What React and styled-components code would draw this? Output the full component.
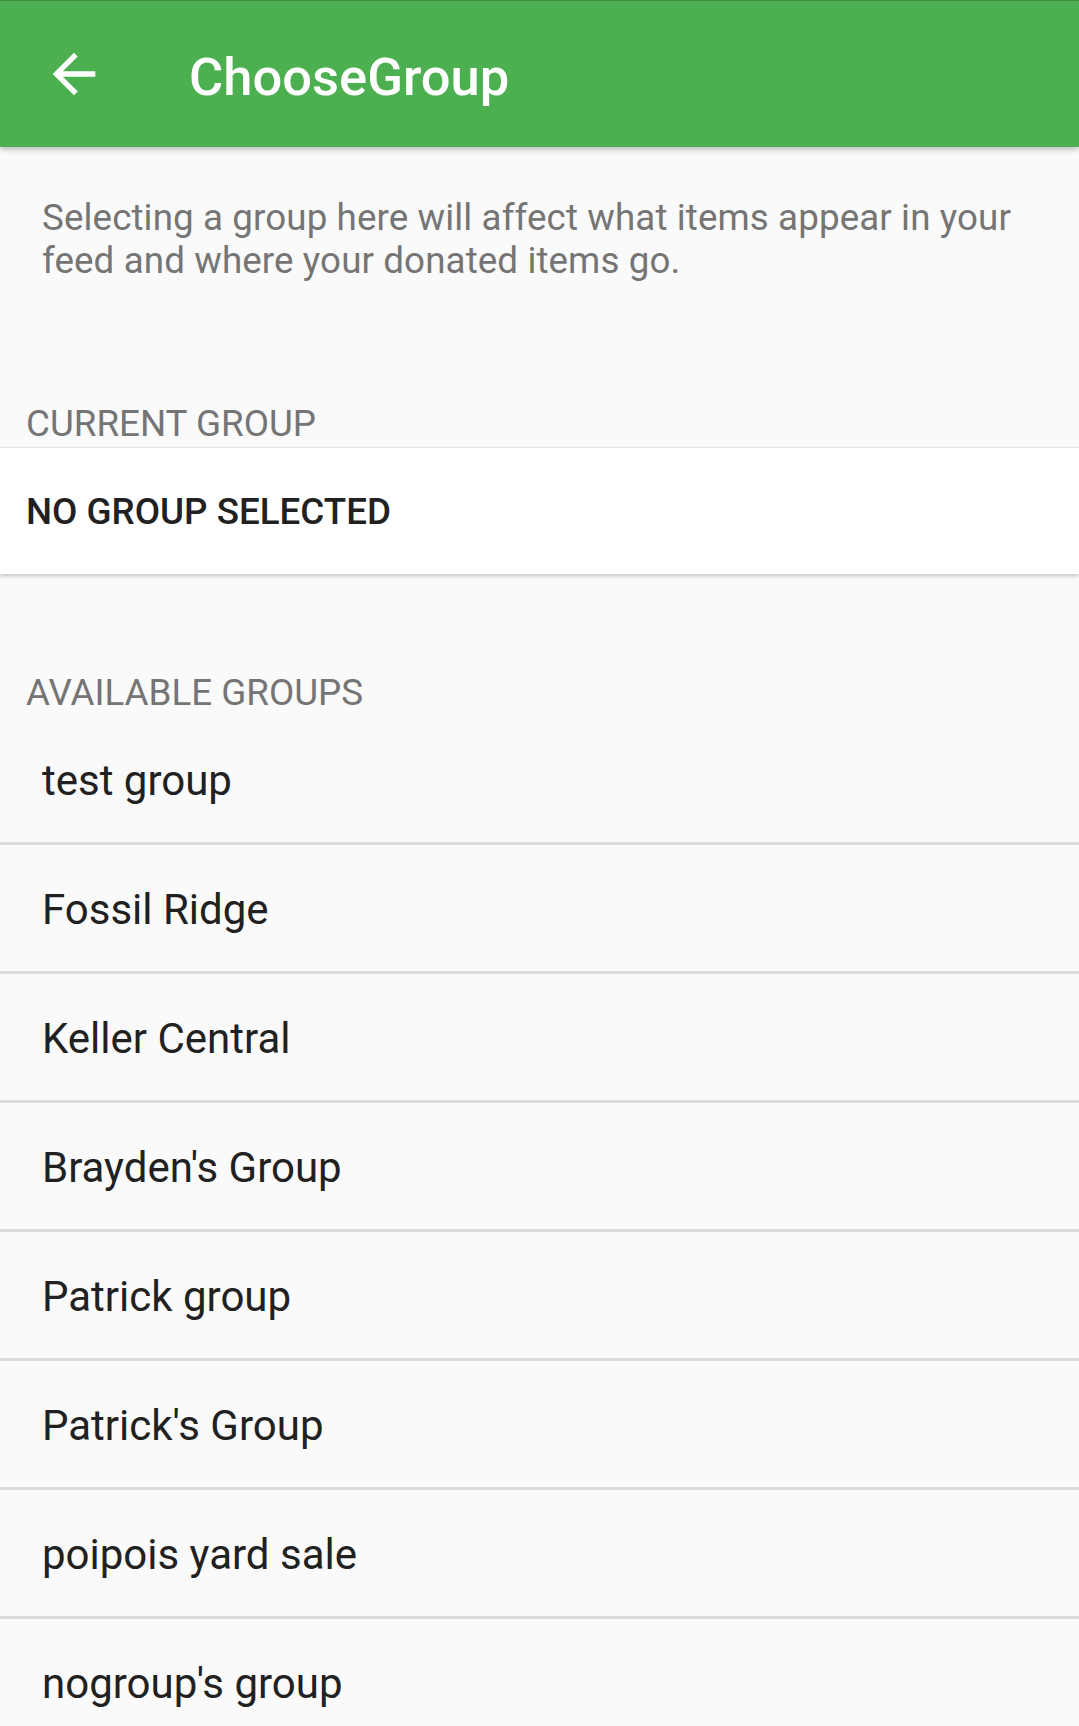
import styled, { createGlobalStyle } from 'styled-components';

const GlobalStyle = createGlobalStyle`
  html, body {
    margin: 0;
    padding: 0;
    background: #fafafa;
  }

  body {
    font-family: Roboto, "Noto Sans", "Liberation Sans", sans-serif;
    -webkit-font-smoothing: antialiased;
  }
`;

const Screen = styled.div`
  min-height: 1726px;
  background: #fafafa;
  overflow: hidden;
`;

const AppBar = styled.header`
  position: relative;
  z-index: 2;
  display: flex;
  align-items: center;
  height: 147px;
  box-sizing: border-box;
  border-top: 1px solid #3e8e41;
  background: #4caf50;
  box-shadow: 0 2px 6px rgba(0, 0, 0, 0.28);
`;

const BackButton = styled.button`
  display: flex;
  align-items: center;
  justify-content: center;
  width: 64px;
  height: 64px;
  margin-left: 42px;
  padding: 0;
  border: 0;
  background: none;
  color: #ffffff;
`;

const Title = styled.h1`
  margin: 0 0 0 83px;
  padding-top: 6px;
  font-size: 52.5px;
  font-weight: 500;
  color: #ffffff;
  line-height: 1;
`;

const Description = styled.p`
  margin: 0;
  padding: 49px 42px 0;
  font-size: 36.75px;
  line-height: 43px;
  letter-spacing: 0.1px;
  color: #757575;
`;

const SectionLabel = styled.h2`
  margin: ${(p) => p.$top}px 0 2px;
  padding-left: 26px;
  font-size: 36.75px;
  font-weight: 400;
  line-height: 43px;
  color: #757575;
  text-transform: uppercase;
`;

const CurrentCard = styled.div`
  display: flex;
  align-items: center;
  height: 127px;
  box-sizing: border-box;
  padding-left: 26px;
  border-top: 1px solid #e2e2e2;
  background: #ffffff;
  box-shadow: 0 2px 4px rgba(0, 0, 0, 0.22);
  font-size: 36.75px;
  font-weight: 500;
  color: #212121;
`;

const GroupList = styled.ul`
  margin: 0;
  padding: 0;
  list-style: none;
`;

const GroupRow = styled.li`
  display: flex;
  align-items: center;
  height: 129px;
  box-sizing: border-box;
  padding: 3px 0 0 42px;
  border-bottom: 3px solid #dcdcdc;
  font-size: 42px;
  color: #212121;
`;

const groups = [
  'test group',
  'Fossil Ridge',
  'Keller Central',
  "Brayden's Group",
  'Patrick group',
  "Patrick's Group",
  'poipois yard sale',
  "nogroup's group",
];

function ArrowBack() {
  return (
    <svg width="64" height="64" viewBox="0 0 24 24" fill="currentColor">
      <path d="M20 11H7.83l5.59-5.59L12 4l-8 8 8 8 1.41-1.41L7.83 13H20v-2z" />
    </svg>
  );
}

export default function App() {
  return (
    <Screen>
      <GlobalStyle />
      <AppBar>
        <BackButton aria-label="Back">
          <ArrowBack />
        </BackButton>
        <Title>ChooseGroup</Title>
      </AppBar>

      <Description>
        Selecting a group here will affect what items appear in your feed and
        where your donated items go.
      </Description>

      <SectionLabel $top={120}>Current Group</SectionLabel>
      <CurrentCard>NO GROUP SELECTED</CurrentCard>

      <SectionLabel $top={97}>Available Groups</SectionLabel>
      <GroupList>
        {groups.map((name) => (
          <GroupRow key={name}>{name}</GroupRow>
        ))}
      </GroupList>
    </Screen>
  );
}
